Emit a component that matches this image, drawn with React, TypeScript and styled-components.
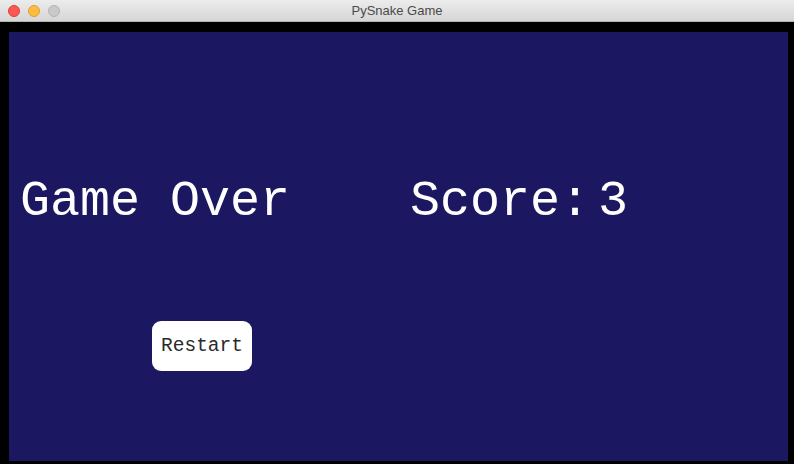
import React from "react";
import styled, { createGlobalStyle } from "styled-components";

const GlobalStyle = createGlobalStyle`
  html, body {
    margin: 0;
    padding: 0;
    width: 794px;
    height: 464px;
    overflow: hidden;
    background: #000;
  }
`;

//window chrome
const Window = styled.div`
  width: 794px;
  height: 464px;
  display: flex;
  flex-direction: column;
  background: #000;
`;

const TitleBar = styled.div`
  height: 22px;
  box-sizing: border-box;
  border-bottom: 1px solid #b4b4b4;
  background: linear-gradient(#ececec, #d6d6d6);
  display: flex;
  align-items: center;
  position: relative;
  padding-left: 8px;
  gap: 8px;
`;

const Light = styled.span<{ $fill: string; $ring: string }>`
  width: 12px;
  height: 12px;
  border-radius: 50%;
  box-sizing: border-box;
  background: ${(p) => p.$fill};
  border: 1px solid ${(p) => p.$ring};
`;

const Title = styled.div`
  position: absolute;
  left: 0;
  right: 0;
  text-align: center;
  font-family: "Liberation Sans", Arial, sans-serif;
  font-size: 13px;
  color: #4a4a4a;
  pointer-events: none;
`;

const Frame = styled.div`
  flex: 1;
  padding: 10px 6px 3px 9px;
  display: flex;
`;

//game canvas
const Canvas = styled.div`
  flex: 1;
  background: #1b1761;
  display: flex;
  flex-direction: column;
  padding: 0 0 0 11px;
`;

const Headline = styled.div`
  margin-top: 142px;
  display: flex;
  align-items: baseline;
  font-family: "Liberation Mono", "Courier New", monospace;
  font-size: 50px;
  line-height: 56px;
  color: #fff;
  white-space: pre;
`;

const ScoreValue = styled.span`
  margin-left: 8px;
`;

const Restart = styled.button`
  margin: 91px 0 0 132px;
  width: 100px;
  height: 50px;
  border: none;
  border-radius: 9px;
  background: #fff;
  font-family: "Liberation Mono", "Courier New", monospace;
  font-size: 19.5px;
  color: #2a2a2a;
  padding: 0;
  cursor: pointer;
`;

export default function App() {
  return (
    <Window>
      <GlobalStyle />
      <TitleBar>
        <Light $fill="#fc5753" $ring="#df3d39" />
        <Light $fill="#fdbc40" $ring="#de9f34" />
        <Light $fill="#c9c9c9" $ring="#b3b3b3" />
        <Title>PySnake Game</Title>
      </TitleBar>
      <Frame>
        <Canvas>
          <Headline>
            {"Game Over    Score:"}
            <ScoreValue>3</ScoreValue>
          </Headline>
          <div>
            <Restart>Restart</Restart>
          </div>
        </Canvas>
      </Frame>
    </Window>
  );
}
